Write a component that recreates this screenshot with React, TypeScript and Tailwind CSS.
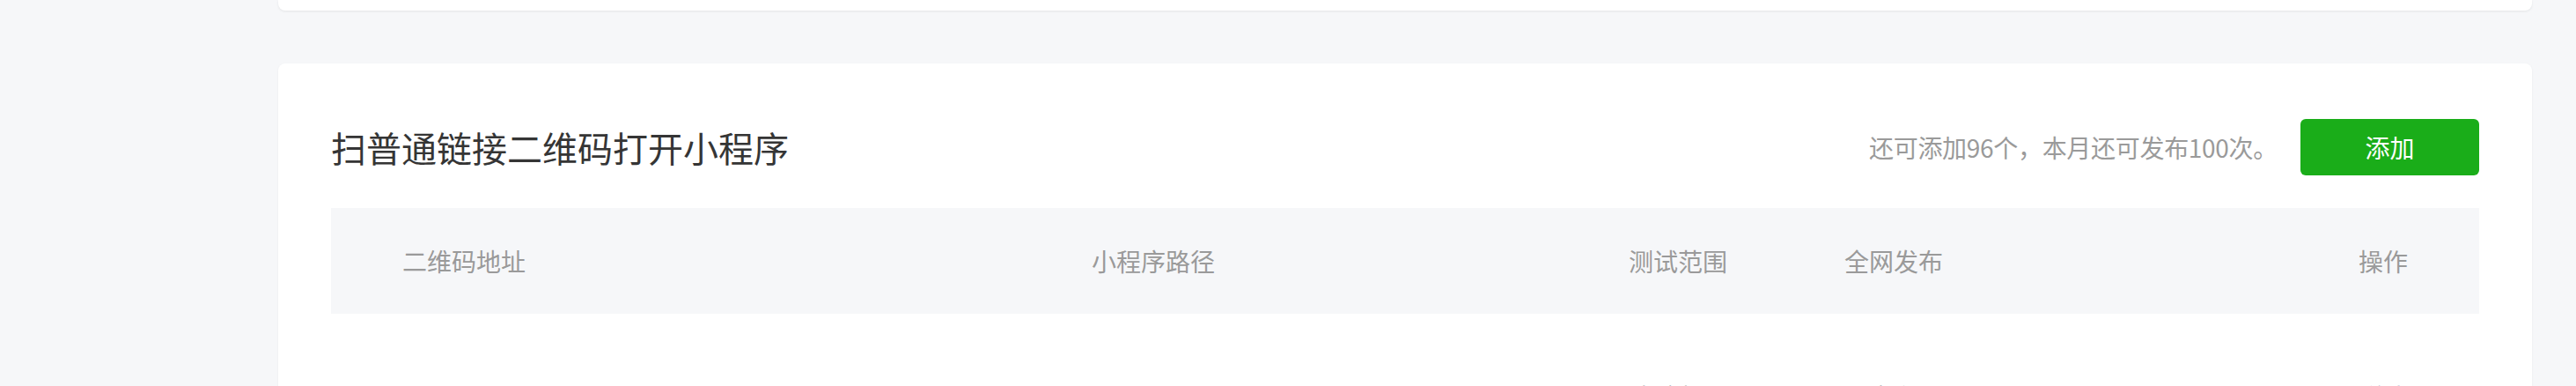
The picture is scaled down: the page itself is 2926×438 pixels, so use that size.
const font = '[font-family:"Noto_Sans_CJK_SC","Noto_Sans",sans-serif]';

const columns = ['二维码地址', '小程序路径', '测试范围', '全网发布'];

const rows = [
  {
    url: 'https://wxaurl.cn/bkdHlfjk8tLk/qrcode?id=1024',
    path: 'pages/index/index',
    scope: '体验版',
    status: '已发布',
  },
];

export default function App() {
  return (
    <div className={`min-h-[438px] w-[2926px] bg-[#f6f7f9] ${font}`}>
      <div className="flex">
        <div className="w-[316px] shrink-0" />
        <div className="w-[2560px]">
          {/* previous card, only its bottom edge is visible */}
          <div className="h-[12px] rounded-b-[8px] bg-white shadow-[0_1px_3px_rgba(0,0,0,0.08)]" />

          <div className="mt-[60px] rounded-[8px] bg-white px-[60px] pt-[63px] pb-[40px] shadow-[0_1px_3px_rgba(0,0,0,0.05)]">
            <div className="flex h-[64px] items-center justify-between">
              <h2 className="text-[40px] leading-[56px] font-normal text-[#353535]">扫普通链接二维码打开小程序</h2>
              <div className="flex items-center">
                <span className="mr-[26px] text-[28px] leading-[40px] tracking-[-0.3px] text-[#9a9a9a]">
                  还可添加96个，本月还可发布100次。
                </span>
                <button className="flex h-[64px] w-[203px] items-center justify-center rounded-[6px] bg-[#1aad19] text-[28px] text-white">
                  添加
                </button>
              </div>
            </div>

            <div className="mt-[37px]">
              <div className="grid h-[120px] grid-cols-[783px_610px_245px_1fr_auto] items-center bg-[#f6f7f9] px-[81px] text-[28px] leading-[40px] text-[#9a9a9a]">
                {columns.map(c => (
                  <span key={c}>{c}</span>
                ))}
                <span className="text-right">操作</span>
              </div>

              {rows.map(r => (
                <div
                  key={r.url}
                  className="grid grid-cols-[783px_610px_245px_1fr_auto] px-[81px] pt-[74px] pb-[60px] text-[28px] leading-[40px] text-[#353535]"
                >
                  <span className="truncate pr-[40px]">{r.url}</span>
                  <span className="truncate pr-[40px]">{r.path}</span>
                  <span>{r.scope}</span>
                  <span>{r.status}</span>
                  <span className="text-right text-[#576b95]">详情</span>
                </div>
              ))}
            </div>
          </div>
        </div>
      </div>
    </div>
  );
}
